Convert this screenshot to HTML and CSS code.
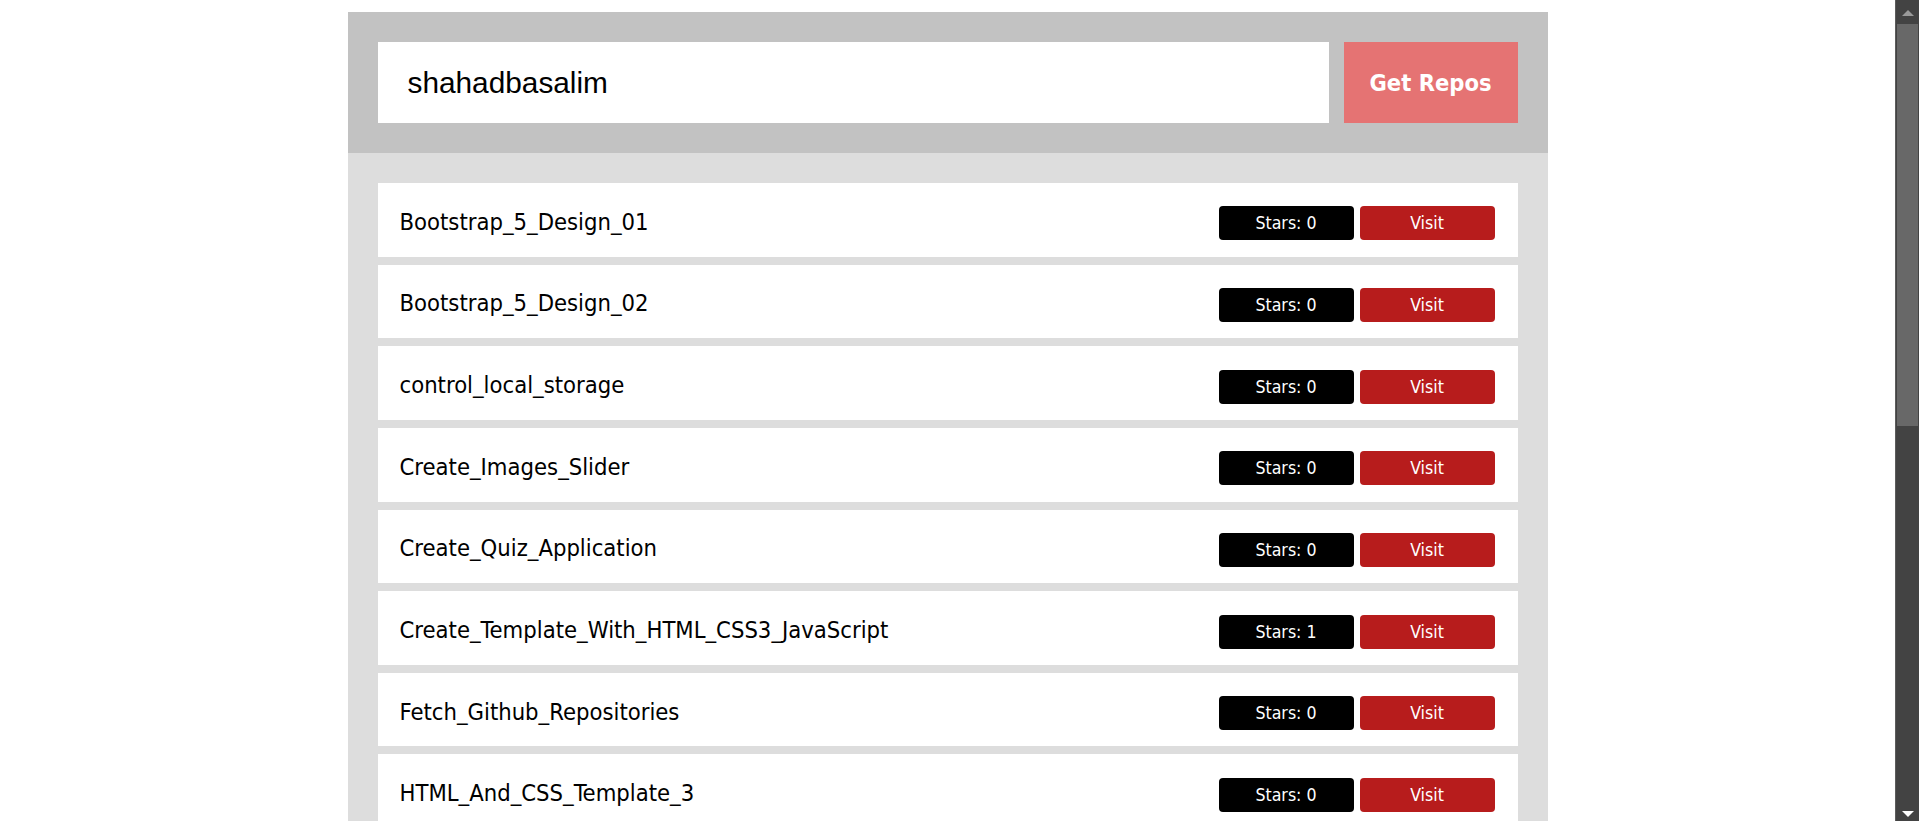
FILE: index.html
```html
<!DOCTYPE html>
<html lang="en">
<head>
<meta charset="utf-8">
<title>Fetch Github Repositories</title>
<link rel="stylesheet" href="styles.css">
</head>
<body>
<div class="container">
  <div class="get-repos">
    <input class="user" type="text" value="shahadbasalim">
    <span class="get-button">Get Repos</span>
  </div>
  <div class="show-data">
    <div class="repo-box"><span class="repo-name">Bootstrap_5_Design_01</span><div class="actions"><span class="stars">Stars: 0</span><a class="visit" href="#">Visit</a></div></div>
    <div class="repo-box"><span class="repo-name">Bootstrap_5_Design_02</span><div class="actions"><span class="stars">Stars: 0</span><a class="visit" href="#">Visit</a></div></div>
    <div class="repo-box"><span class="repo-name">control_local_storage</span><div class="actions"><span class="stars">Stars: 0</span><a class="visit" href="#">Visit</a></div></div>
    <div class="repo-box"><span class="repo-name">Create_Images_Slider</span><div class="actions"><span class="stars">Stars: 0</span><a class="visit" href="#">Visit</a></div></div>
    <div class="repo-box"><span class="repo-name">Create_Quiz_Application</span><div class="actions"><span class="stars">Stars: 0</span><a class="visit" href="#">Visit</a></div></div>
    <div class="repo-box"><span class="repo-name">Create_Template_With_HTML_CSS3_JavaScript</span><div class="actions"><span class="stars">Stars: 1</span><a class="visit" href="#">Visit</a></div></div>
    <div class="repo-box"><span class="repo-name">Fetch_Github_Repositories</span><div class="actions"><span class="stars">Stars: 0</span><a class="visit" href="#">Visit</a></div></div>
    <div class="repo-box"><span class="repo-name">HTML_And_CSS_Template_3</span><div class="actions"><span class="stars">Stars: 0</span><a class="visit" href="#">Visit</a></div></div>
    <div class="repo-box"><span class="repo-name">HTML_And_CSS_Template_4</span><div class="actions"><span class="stars">Stars: 0</span><a class="visit" href="#">Visit</a></div></div>
    <div class="repo-box"><span class="repo-name">JavaScript_Projects</span><div class="actions"><span class="stars">Stars: 0</span><a class="visit" href="#">Visit</a></div></div>
    <div class="repo-box"><span class="repo-name">Leon_Template</span><div class="actions"><span class="stars">Stars: 0</span><a class="visit" href="#">Visit</a></div></div>
    <div class="repo-box"><span class="repo-name">Memory_Game</span><div class="actions"><span class="stars">Stars: 0</span><a class="visit" href="#">Visit</a></div></div>
    <div class="repo-box"><span class="repo-name">Random_Color_Generator</span><div class="actions"><span class="stars">Stars: 0</span><a class="visit" href="#">Visit</a></div></div>
    <div class="repo-box"><span class="repo-name">shahadbasalim</span><div class="actions"><span class="stars">Stars: 0</span><a class="visit" href="#">Visit</a></div></div>
    <div class="repo-box"><span class="repo-name">Special_Design</span><div class="actions"><span class="stars">Stars: 0</span><a class="visit" href="#">Visit</a></div></div>
    <div class="repo-box"><span class="repo-name">To_Do_List</span><div class="actions"><span class="stars">Stars: 0</span><a class="visit" href="#">Visit</a></div></div>
    <div class="repo-box"><span class="repo-name">Typing_Speed_Game</span><div class="actions"><span class="stars">Stars: 0</span><a class="visit" href="#">Visit</a></div></div>
  </div>
</div>
<div class="scrollbar" aria-hidden="true">
  <span class="sb-up"></span>
  <span class="sb-thumb"></span>
  <span class="sb-space"></span>
  <span class="sb-down"></span>
</div>
</body>
</html>
```

FILE: styles.css
```css
html::-webkit-scrollbar {
  display: none;
}

html {
  scrollbar-width: none;
}

body {
  margin: 0 24px 0 0;
  padding: 12px 0 12px;
  background: #ffffff;
  font-family: "DejaVu Sans Condensed", "DejaVu Sans", sans-serif;
  font-stretch: condensed;
}

.container {
  width: 1200px;
  margin: 0 auto;
}

.get-repos {
  display: flex;
  gap: 15px;
  padding: 30px;
  background: #c2c2c2;
}

.user {
  flex: 1;
  height: 81px;
  box-sizing: border-box;
  border: none;
  outline: none;
  padding: 0 30px;
  margin: 0;
  background: #ffffff;
  color: #000000;
  font-family: "Liberation Sans", Arial, sans-serif;
  font-size: 29.8px;
}

.get-button {
  width: 174px;
  height: 81px;
  display: flex;
  align-items: center;
  justify-content: center;
  background: #e57373;
  color: #ffffff;
  font-weight: bold;
  font-size: 23.5px;
}

.show-data {
  display: flex;
  flex-direction: column;
  gap: 8px;
  padding: 30px;
  background: #dddddd;
}

.repo-box {
  height: 73.65px;
  display: flex;
  align-items: center;
  justify-content: space-between;
  padding: 0 23px 0 22px;
  background: #ffffff;
  color: #000000;
}

.repo-name {
  margin-top: 4px;
  font-size: 23.6px;
}

.actions {
  display: flex;
  gap: 6px;
  margin-top: 7px;
}

.stars,
.visit {
  width: 135px;
  height: 34px;
  display: flex;
  align-items: center;
  justify-content: center;
  border-radius: 4px;
  color: #ffffff;
  font-size: 17.6px;
  text-decoration: none;
}

.stars {
  background: #000000;
}

.visit {
  background: #b71c1c;
}

/* window scrollbar as shown in the screenshot */
.scrollbar {
  position: fixed;
  top: 0;
  right: 0;
  width: 24px;
  height: 100vh;
  box-sizing: border-box;
  display: flex;
  flex-direction: column;
  align-items: center;
  background: #434343;
  border-left: 1px solid #5c5c5c;
}

.sb-up {
  margin-top: 10px;
  width: 0;
  height: 0;
  border-left: 6px solid transparent;
  border-right: 6px solid transparent;
  border-bottom: 6px solid #9a9a9a;
}

.sb-thumb {
  margin-top: 8px;
  width: 21px;
  height: 402px;
  background: #686868;
}

.sb-space {
  flex: 1;
}

.sb-down {
  margin-bottom: 4px;
  width: 0;
  height: 0;
  border-left: 6px solid transparent;
  border-right: 6px solid transparent;
  border-top: 6px solid #ffffff;
}
```
